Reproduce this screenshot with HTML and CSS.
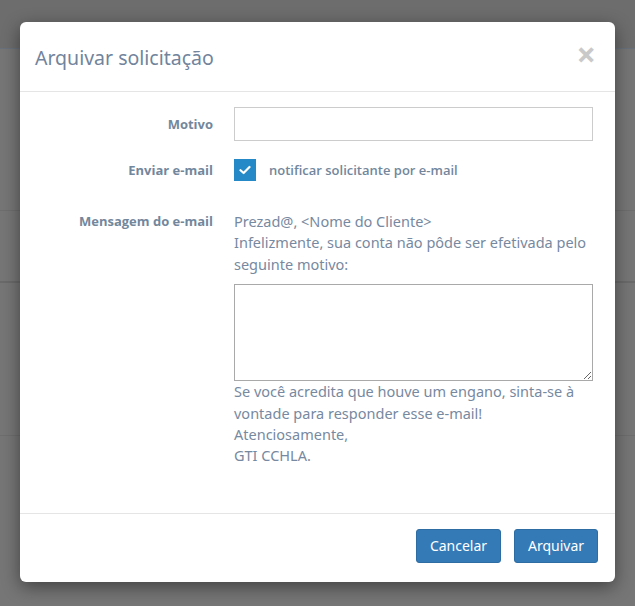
FILE: index.html
```html
<!DOCTYPE html>
<html lang="pt-BR">
<head>
<meta charset="utf-8">
<title>Arquivar solicitação</title>
<link rel="stylesheet" href="styles.css">
</head>
<body>
<div class="page">
  <div class="page-top"></div>
  <div class="page-row r1"></div>
  <div class="page-row r2"></div>
  <div class="page-row r3"></div>
  <div class="page-row r4"></div>
</div>

<div class="modal">
  <div class="modal-header">
    <h4 class="modal-title">Arquivar solicitação</h4>
    <span class="close">×</span>
  </div>
  <div class="modal-body">
    <div class="form-row">
      <label class="form-label">Motivo</label>
      <input class="form-input" type="text">
    </div>
    <div class="form-row row-check">
      <label class="form-label">Enviar e-mail</label>
      <div class="check-wrap">
        <span class="checkbox">
          <svg width="12" height="10" viewBox="0 0 12 10"><path d="M1.5 5.2 L4.6 8 L10.5 2" fill="none" stroke="#fff" stroke-width="2.2" stroke-linecap="round" stroke-linejoin="round"/></svg>
        </span>
        <span class="check-label">notificar solicitante por e-mail</span>
      </div>
    </div>
    <div class="form-row row-msg">
      <label class="form-label">Mensagem do e-mail</label>
      <div class="msg">
        <p class="msg-text">Prezad@, &lt;Nome do Cliente&gt;<br>Infelizmente, sua conta não pôde ser efetivada pelo seguinte motivo:</p>
        <textarea class="msg-area"></textarea>
        <p class="msg-text">Se você acredita que houve um engano, sinta-se à vontade para responder esse e-mail!<br>Atenciosamente,<br>GTI CCHLA.</p>
      </div>
    </div>
  </div>
  <div class="modal-footer">
    <button class="btn">Cancelar</button>
    <button class="btn">Arquivar</button>
  </div>
</div>
</body>
</html>
```

FILE: styles.css
```css
html, body {
  margin: 0;
  padding: 0;
}
body {
  width: 635px;
  height: 606px;
  overflow: hidden;
  background: #767676;
  font-family: "Open Sans", "DejaVu Sans", sans-serif;
  position: relative;
}
.page {
  display: flex;
  flex-direction: column;
}
.page-top {
  height: 48px;
  background: #6d6d6d;
  border-bottom: 1px solid #69717c;
}
.page-row {
  border-bottom: 1px solid #6e6e6e;
}
.r1 { height: 161px; }
.r2 { height: 70px; border-bottom: 2px solid #6a6a6a; }
.r3 { height: 152px; }
.r4 { height: 100px; border-bottom: none; }

.modal {
  position: absolute;
  left: 20px;
  top: 22px;
  width: 595px;
  background: #fff;
  border-radius: 6px;
  box-shadow: 0 5px 18px rgba(0, 0, 0, 0.45);
  color: #73879c;
}
.modal-header {
  height: 69px;
  padding: 0 18px 0 15px;
  display: flex;
  align-items: center;
  justify-content: space-between;
  border-bottom: 1px solid #e5e5e5;
}
.modal-title {
  margin: 0;
  font-family: "Noto Sans", "Open Sans", sans-serif;
  font-size: 19.5px;
  font-weight: 400;
  color: #71849c;
  line-height: 1;
  padding-top: 3px;
}
.close {
  font-size: 34px;
  font-weight: 700;
  line-height: 1;
  color: #c9c9c9;
  margin-top: -6px;
  margin-right: 1px;
}
.modal-body {
  padding: 15px 0 46px 0;
}
.form-row {
  display: grid;
  grid-template-columns: 193px 359px;
  column-gap: 21px;
  align-items: center;
}
.form-label {
  text-align: right;
  font-size: 13px;
  font-weight: 700;
  color: #73879c;
}
.form-input {
  box-sizing: border-box;
  height: 34px;
  width: 359px;
  margin: 0;
  border: 1px solid #ccc;
  border-radius: 0;
  padding: 6px 12px;
  font: inherit;
}
.row-check {
  margin-top: 15px;
  min-height: 28px;
}
.check-wrap {
  display: flex;
  align-items: center;
  gap: 13px;
}
.checkbox {
  width: 22px;
  height: 22px;
  background: #2489c6;
  display: flex;
  align-items: center;
  justify-content: center;
}
.check-label {
  font-size: 13px;
  font-weight: 600;
  color: #73879c;
}
.row-msg {
  margin-top: 27px;
  align-items: start;
}
.row-msg .form-label {
  line-height: 21.4px;
}
.msg-text {
  margin: 0;
  font-family: "Noto Sans", "Open Sans", sans-serif;
  font-size: 14.5px;
  line-height: 21.4px;
  color: #7789a0;
}
.msg-area {
  display: block;
  box-sizing: border-box;
  width: 359px;
  height: 97px;
  margin: 9px 0 0 0;
  border: 1px solid #a9a9a9;
  border-radius: 0;
  font: inherit;
}
.modal-footer {
  border-top: 1px solid #e5e5e5;
  padding: 15px 17px 19px;
  display: flex;
  justify-content: flex-end;
  gap: 13px;
}
.btn {
  height: 34px;
  padding: 0 12px;
  background: #337ab7;
  border: 1px solid #2e6da4;
  border-radius: 3px;
  color: #fff;
  font-family: "Noto Sans", "Open Sans", sans-serif;
  font-size: 14px;
  line-height: 1;
}
.btn:first-child { width: 85px; }
.btn:last-child { width: 84px; }
```
